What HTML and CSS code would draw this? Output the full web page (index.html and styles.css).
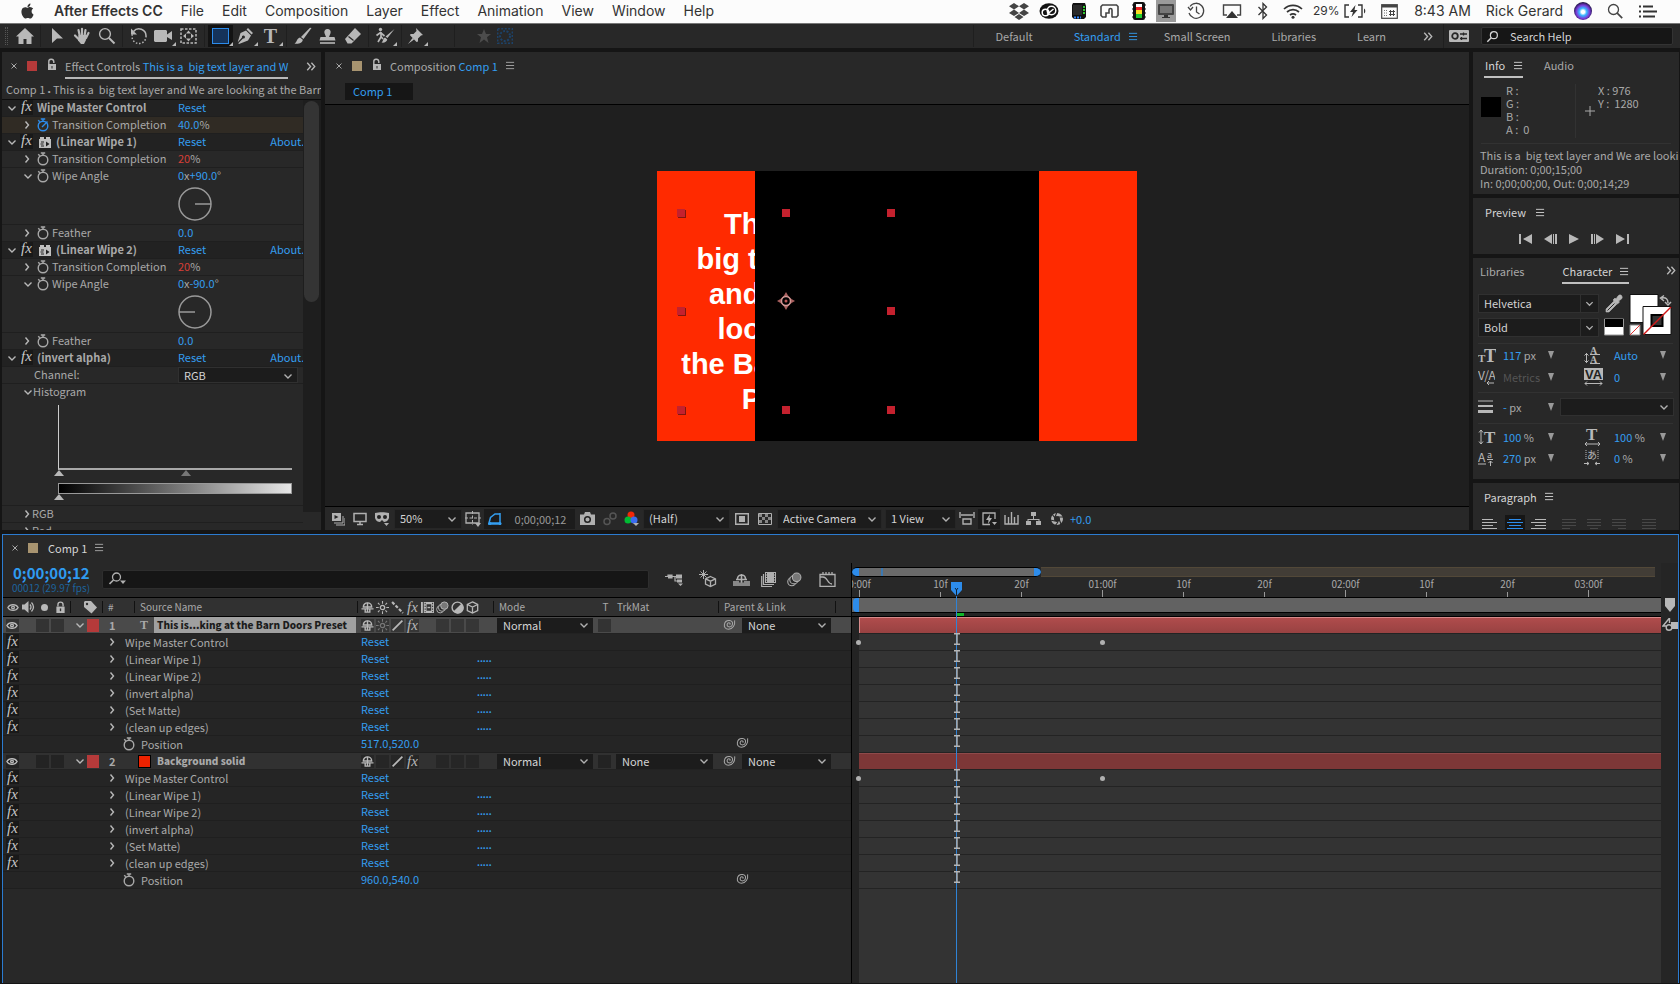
FILE: index.html
```html
<!DOCTYPE html>
<html lang="en">
<head>
<meta charset="utf-8">
<title>After Effects CC</title>
<link rel="stylesheet" href="styles.css">
</head>
<body>
<svg class="defs" aria-hidden="true">
  <symbol id="chev-d" viewBox="0 0 10 10"><path d="M1.500 3.500 5 7l3.500-3.500" fill="none" stroke="currentColor" stroke-width="1.400"/></symbol>
  <symbol id="chev-r" viewBox="0 0 10 10"><path d="M3.500 1.500 6.500 5l-3 3.500" fill="none" stroke="currentColor" stroke-width="1.400"/></symbol>
  <symbol id="watch" viewBox="0 0 14 14"><g fill="none" stroke="currentColor" stroke-width="1.400"><circle cx="7" cy="8" r="4.800"/><path d="M4.800 1h4.400M7 1v2M2.200 2.200l1.600 1.600"/></g></symbol>
  <symbol id="watch-on" viewBox="0 0 14 14"><g fill="none" stroke="currentColor" stroke-width="1.400"><circle cx="7" cy="8" r="4.800"/><path d="M4.800 1h4.400M7 1v2M2.200 2.200l1.600 1.600M6 9l5.500-5.500"/></g></symbol>
  <symbol id="brick" viewBox="0 0 14 14"><path d="M2 2h4v2h2V2h4v2h1v9H1V4h1z"/><path d="M3 7h3M2.500 9h3M3 11h3" stroke="#222" fill="none"/><path d="M8 6.500v5L11.500 9z" fill="#222"/></symbol>
  <symbol id="burger" viewBox="0 0 10 10"><path d="M0 1.500h9M0 5h9M0 8.500h9" stroke="currentColor" stroke-width="1"/></symbol>
  <symbol id="more" viewBox="0 0 12 12"><path d="M1.500 1.500 5.500 6l-4 4.500M6.500 1.500l4 4.500-4 4.500" fill="none" stroke="currentColor" stroke-width="1.600"/></symbol>
  <symbol id="close" viewBox="0 0 8 8"><path d="M1.500 1.500l5 5m0-5l-5 5" stroke="currentColor" stroke-width="1"/></symbol>
  <symbol id="unlock" viewBox="0 0 12 14"><path d="M2 6h8v6H2z"/><path d="M2.800 6V4a2.400 2.400 0 0 1 5-.500V5" fill="none" stroke="currentColor" stroke-width="1.400"/><path d="M6 8v2.500" stroke="#282828"/></symbol>
  <symbol id="lock" viewBox="0 0 12 14"><path d="M1.500 6h9v7h-9z"/><path d="M3.200 6V4a2.800 2.800 0 0 1 5.600 0v2" fill="none" stroke="currentColor" stroke-width="1.500"/><path d="M6 8v3" stroke="#303030" stroke-width="1.500"/></symbol>
  <symbol id="lens" viewBox="0 0 16 14"><circle cx="9" cy="5.500" r="4" fill="none" stroke="currentColor" stroke-width="1.400"/><path d="M6 8.500 1.500 13" stroke="currentColor" stroke-width="1.600"/></symbol>
  <symbol id="eye" viewBox="0 0 14 10"><path d="M1 5c2.500-4.500 9.500-4.500 12 0-2.500 4.500-9.500 4.500-12 0z" fill="none" stroke="currentColor" stroke-width="1.500"/><circle cx="7" cy="5" r="2.300"/><circle cx="7" cy="5" r=".8" fill="#333"/></symbol>
  <symbol id="swirl" viewBox="0 0 14 12"><path d="M12.500 1c.8 5-2 9.500-6.500 9.500C2.500 10.500 1 8 1.500 5.500 2 2.500 4.500 1 7 1.200c2.500.2 3.700 2 3.200 4-.4 2-2 3-3.700 2.800-1.500-.2-2.300-1.500-2-2.700.4-1.300 1.500-1.800 2.500-1.500.8.300 1 1.200.2 1.800" fill="none" stroke="currentColor" stroke-width="1.100"/></symbol>
  <symbol id="shy" viewBox="0 0 14 14"><path d="M2.500 6.500a4.500 4.500 0 0 1 9 0z" fill="none" stroke="currentColor" stroke-width="1.500"/><path d="M7 2v9.500M.5 8.500h13M4.500 9v3h5V9" fill="none" stroke="currentColor" stroke-width="1.500"/></symbol>
  <symbol id="sun" viewBox="0 0 12 12"><circle cx="6" cy="6" r="2" fill="none" stroke="currentColor" stroke-width="1.200"/><path d="M6 0v2.500M6 9.500V12M0 6h2.500M9.500 6H12M1.800 1.800l1.500 1.500M8.700 8.700l1.500 1.500M10.200 1.800 8.700 3.300M3.300 8.700l-1.500 1.500" stroke="currentColor"/></symbol>
  <symbol id="slash" viewBox="0 0 12 12"><path d="M1.500 10.500l9-9" stroke="currentColor" stroke-width="1.600"/></symbol>
  <symbol id="dots" viewBox="0 0 12 12"><path d="M1 1l10 10" stroke="currentColor" stroke-width="2" stroke-dasharray="3 1.500"/></symbol>
  <symbol id="film" viewBox="0 0 14 14"><path d="M0 1h2v12H0zM3 1h11v12H3z"/><path d="M4.500 2v10M12.500 2v10" stroke="#222" stroke-dasharray="1.500 1.500"/><path d="M6 3.500h5v7H6z" fill="#333"/><path d="M7 7h3" stroke="currentColor" stroke-width="1.500"/></symbol>
  <symbol id="blur" viewBox="0 0 14 14"><g stroke="currentColor" fill="#292929"><circle cx="4.500" cy="9" r="3.800"/><circle cx="6.500" cy="7.200" r="3.900"/><circle cx="9" cy="5" r="4" fill="#777"/></g></symbol>
  <symbol id="half" viewBox="0 0 12 12"><circle cx="6" cy="6" r="5" fill="none" stroke="currentColor" stroke-width="1.300"/><path d="M9.800 2.200A5.400 5.400 0 1 1 2.200 9.800z"/></symbol>
  <symbol id="cube" viewBox="0 0 12 12"><path d="M6 .8l4.800 2.400v5.600L6 11.200 1.200 8.800V3.200zM1.200 3.200 6 5.600l4.800-2.400M6 5.600v5.600" fill="none" stroke="currentColor" stroke-width="1.200"/></symbol>
  <symbol id="ibeam" viewBox="0 0 8 12"><path d="M1 .700h6M1 11.300h6M4 1v10" fill="none" stroke="#b5b5b5" stroke-width="1.400"/></symbol>
  <symbol id="tri-d" viewBox="0 0 8 8"><path d="M1 0h6L4 8z"/></symbol>
</svg>

<div class="app">
<header class="menubar">
  <nav class="menus">
    <button class="apple" aria-label="Apple menu"><svg width="15" height="16" viewBox="0 0 24 24"><path d="M12.152 6.896c-.948 0-2.415-1.078-3.960-1.040-2.040.027-3.910 1.183-4.961 3.014-2.117 3.675-.546 9.103 1.519 12.090 1.013 1.454 2.208 3.090 3.792 3.039 1.520-.065 2.090-.987 3.935-.987 1.831 0 2.350.987 3.960.948 1.637-.026 2.676-1.480 3.676-2.948 1.156-1.688 1.636-3.325 1.662-3.415-.039-.013-3.182-1.221-3.220-4.857-.026-3.040 2.480-4.494 2.597-4.559-1.429-2.090-3.623-2.324-4.390-2.376-2-.156-3.675 1.090-4.610 1.090zM15.530 3.830c.843-1.012 1.400-2.427 1.245-3.830-1.207.052-2.662.805-3.532 1.818-.780.896-1.454 2.338-1.273 3.714 1.338.104 2.715-.688 3.559-1.701"/></svg></button>
    <button class="strong">After Effects CC</button><button>File</button><button>Edit</button><button>Composition</button><button>Layer</button><button>Effect</button><button>Animation</button><button>View</button><button>Window</button><button>Help</button>
  </nav>
  <div class="status">
    <span class="c30"><svg width="20" height="18" viewBox="0 0 20 18"><path d="M5 1l5 3.300-5 3.300L0 4.300zM15 1l5 3.300-5 3.300-5-3.300zM5 7.600l5 3.300-5 3.200-5-3.200zM15 7.600l5 3.300-5 3.200-5-3.200zM10 12l4.500 2.900L10 18l-4.500-3.100z" fill="#444"/></svg></span>
    <span class="c30"><svg width="20" height="16" viewBox="0 0 20 16"><ellipse cx="10" cy="8" rx="9.500" ry="7.800" fill="#111"/><g fill="none" stroke="#fff" stroke-width="1.500"><circle cx="6.500" cy="9.500" r="3.300"/><circle cx="12.500" cy="7.500" r="4.300"/><path d="M8 11.500 14.500 6"/></g></svg></span>
    <span class="c30"><svg width="18" height="18" viewBox="0 0 18 18"><path d="M3 1h12l1 3v11l-2 2H4l-2-2V3z" fill="#111"/><path d="M3 3h9v10H3z" fill="#2a2a2a"/><path d="M14 4v8" stroke="#3c3" stroke-width="2" stroke-dasharray="2 1"/><path d="M4 15.500h7" stroke="#38f" stroke-width="2" stroke-dasharray="2 1"/></svg></span>
    <span class="c30"><svg width="19" height="16" viewBox="0 0 19 16"><g fill="none" stroke="#444" stroke-width="1.600"><path d="M6 14H2.500L1 12.500v-9L2.500 2h14L18 3.500v9L16.500 14H12"/><path d="M6 14.500V10h3V7a1.500 1.500 0 0 1 3 0v7.500"/></g></svg></span>
    <span class="c30"><svg width="14" height="18" viewBox="0 0 14 18"><rect x="1" width="12" height="18" rx="2" fill="#111"/><path d="M0 3h14M0 7h14M0 11h14M0 15h14" stroke="#111"/><path d="M4 2h6v3H4z" fill="#fff"/><path d="M4 5h6v3H4z" fill="#e22"/><path d="M4 8h6v4H4z" fill="#fd2"/><path d="M4 12h6v4H4z" fill="#2c3"/></svg></span>
    <span class="c24"><svg width="20" height="22" viewBox="0 0 20 22"><rect width="20" height="22" fill="#9a9a9a"/><rect x="2" y="4" width="16" height="11" rx="1" fill="#444"/><rect x="4" y="6" width="12" height="7" fill="#777"/><path d="M8 15h4v2h2v1H6v-1h2z" fill="#333"/></svg></span>
    <span class="c36"><svg width="18" height="18" viewBox="0 0 18 18"><path d="M3 4.500A7.500 7.500 0 1 1 2 11M1 5l2.500 3L6 5" fill="none" stroke="#444" stroke-width="1.300"/><path d="M9.500 4.500V10l3 2" fill="none" stroke="#444" stroke-width="1.300"/></svg></span>
    <span class="c36"><svg width="20" height="16" viewBox="0 0 20 16"><path d="M5 12H1.500V2h17v10H15" fill="none" stroke="#444" stroke-width="1.400"/><path d="M10 8l6 7H4z" fill="#333"/></svg></span>
    <span class="c26"><svg width="12" height="18" viewBox="0 0 12 18"><path d="M1.500 5l8 8L6 16.500v-15L9.500 5l-8 8" fill="none" stroke="#333" stroke-width="1.300"/></svg></span>
    <span class="c34"><svg width="22" height="16" viewBox="0 0 22 16"><g fill="none" stroke="#333" stroke-width="1.700"><path d="M2 6a13 13 0 0 1 18 0M5 9a9 9 0 0 1 12 0M8 12a5 5 0 0 1 6 0"/></g><circle cx="11" cy="14.300" r="1.500" fill="#333"/></svg></span>
    <span class="pct">29%</span>
    <span class="c28"><svg width="24" height="14" viewBox="0 0 24 14"><path d="M6 1H2v12h4M15 1h4v12h-4" fill="none" stroke="#333" stroke-width="1.400"/><path d="M21 4.500a3 3 0 0 1 0 5z"/><path d="M12.500 1 7 8h3l-1.500 5L14.500 6h-3z" fill="#333"/></svg></span>
    <span class="c40"><svg width="17" height="15" viewBox="0 0 17 15"><rect x=".7" y=".7" width="15.600" height="13.600" fill="none" stroke="#444" stroke-width="1.200"/><path d="M1 1h15v2.500H1z" fill="#444"/><path d="M3 6.500h4M3 9h4M3 11.500h4" stroke="#777" stroke-dasharray="1 1"/><path d="M9.500 6v6M12.500 6v6M8 7.500h6M8 10.500h6" stroke="#444" fill="none"/></svg></span>
    <span class="clock">8:43 AM</span><span class="user">Rick Gerard</span>
    <span class="siri"></span>
    <span class="c44"><svg width="16" height="16" viewBox="0 0 16 16"><circle cx="6.500" cy="6.500" r="5" fill="none" stroke="#444" stroke-width="1.300"/><path d="M10.200 10.200l5 5" stroke="#444" stroke-width="1.700"/></svg></span>
    <span class="c22"><svg width="18" height="13" viewBox="0 0 18 13"><path d="M0 1.500h2M4 1.500h10M0 6.500h2M4 6.500h14M0 11.500h2M4 11.500h12" stroke="#333" stroke-width="1.800"/></svg></span>
  </div>
</header>

<div class="toolbar">
  <div class="grip"></div>
  <button class="tool home" aria-label="Home"><svg width="18" height="16" viewBox="0 0 18 16"><path d="M9 0l9 8.500h-2.500V16h-5v-5h-3v5h-5V8.500H0z"/></svg></button>
  <div class="group">
    <button class="tool" aria-label="Selection"><svg width="14" height="18" viewBox="0 0 14 18"><path d="M2 1l11 10.500H7L2 16z"/></svg></button>
    <button class="tool" aria-label="Hand"><svg width="18" height="18" viewBox="0 0 18 18"><g stroke="currentColor" stroke-width="2.200" stroke-linecap="round"><path d="M5.500 3l1.500 7M9 1.800V9M12.500 3 11.500 9M15.500 6l-2.500 5M2 8.500l4 4"/></g><path d="M5.500 8h8.300l-1 5.500L11 17H8l-3-3.500z"/></svg></button>
    <button class="tool" aria-label="Zoom"><svg width="18" height="18" viewBox="0 0 18 18"><circle cx="7" cy="7" r="5.400" fill="none" stroke="currentColor" stroke-width="1.400"/><path d="M11 11l5.500 5.500" stroke="currentColor" stroke-width="2"/></svg></button>
  </div>
  <div class="group">
    <button class="tool" aria-label="Rotate"><svg width="18" height="18" viewBox="0 0 18 18"><path d="M3.500 4.500A7 7 0 0 1 16 9" fill="none" stroke="currentColor" stroke-width="1.500"/><path d="M16 9A7 7 0 1 1 2.500 7" fill="none" stroke="currentColor" stroke-width="1.500" stroke-dasharray="1.500 1.800"/><path d="M1 1.500v6h6z"/></svg></button>
    <button class="tool more-tools" aria-label="Camera"><svg width="19" height="13" viewBox="0 0 19 13"><path d="M1 0h11l1 1v3.500L18 1v9l-5-3v4l-1 1H1l-1-1V1z"/></svg></button>
    <button class="tool" aria-label="Pan behind"><svg width="17" height="16" viewBox="0 0 17 16"><rect x="1" y="1" width="15" height="14" fill="none" stroke="currentColor" stroke-width="1.500" stroke-dasharray="2.500 1.500"/><path d="M8.500 2.500l2.500 3H6zM8.500 13.500l2.500-3H6zM3 8l3-2.500v5zM14 8l-3-2.500v5z"/></svg></button>
  </div>
  <div class="group">
    <button class="tool more-tools active" aria-label="Rectangle"><span class="rect-tool"></span></button>
    <button class="tool more-tools" aria-label="Pen"><svg width="17" height="18" viewBox="0 0 17 18"><path d="M11 1l5 5-1.500 1.500-5-5zM9 3.500l5 5-3 5L2 17l-.7-.8L6 11.500A1.500 1.500 0 1 0 5 10.500L.7 15.300 3.500 6z"/></svg></button>
    <button class="tool more-tools tt" aria-label="Type">T</button>
  </div>
  <div class="group">
    <button class="tool" aria-label="Brush"><svg width="18" height="18" viewBox="0 0 18 18"><path d="M17.500 1 9.500 12 7 10 16 .8zM6 10.500l2.800 2.300C8.500 16 4 17.500.5 16.500 3 15.500 2.500 11.500 6 10.500z"/></svg></button>
    <button class="tool" aria-label="Clone stamp"><svg width="17" height="17" viewBox="0 0 17 17"><path d="M8.500 1a3.200 3.200 0 0 1 3 4.300L10 9h5.500l1 3.500H.5l1-3.500H7L5.500 5.300A3.200 3.200 0 0 1 8.500 1z"/><path d="M1 15h15" stroke="currentColor" stroke-width="1.600"/></svg></button>
    <button class="tool" aria-label="Eraser"><svg width="18" height="18" viewBox="0 0 18 18"><path d="M11 1l6 6L7.500 16.500h-4L1 12z"/><path d="M4.500 9.500l5 4" stroke="#282828" stroke-width="1.200"/></svg></button>
  </div>
  <div class="group one"><button class="tool more-tools" aria-label="Roto brush"><svg width="20" height="18" viewBox="0 0 20 18"><circle cx="5.500" cy="2.500" r="1.700"/><path d="M6 5v5l-3 5M6 9.500 8 12M1.500 8.500 5.500 5.500 9.500 9" stroke="currentColor" stroke-width="1.700" fill="none"/><path d="M19.500 2l-7 9-2-1.500zM10 10.500l2.300 2c-.3 2.500-3.300 3.500-5.800 3 1.800-1 1.300-4 3.500-5z"/></svg></button></div>
  <div class="group pin"><button class="tool more-tools" aria-label="Puppet pin"><svg width="17" height="18" viewBox="0 0 17 18"><path d="M9 1l7 7-2 .5-3 3v3L9.500 15 3 8.300l.5-1.300h3L9.500 4zM5.500 11l1.500 1.500L1 17z"/></svg></button></div>
  <div class="group extras">
    <svg width="14" height="14" viewBox="0 0 14 14"><path d="M7 0l2 5h5l-4 3.300L11.500 14 7 10.500 2.500 14 4 8.300 0 5h5z" fill="#4c4c4c"/></svg>
    <svg width="16" height="16" viewBox="0 0 16 16"><rect x=".7" y=".7" width="14.600" height="14.600" fill="none" stroke="#1d4268" stroke-width="1.500" stroke-dasharray="2 1.500"/><circle cx="8" cy="8" r="5" fill="none" stroke="#1d4268" stroke-width="2" stroke-dasharray="2 1.500"/></svg>
  </div>
  <nav class="workspaces">
    <button>Default</button>
    <span class="ws-on"><button>Standard</button><svg class="burger"><use href="#burger"/></svg></span>
    <button>Small Screen</button><button>Libraries</button><button>Learn</button>
    <svg class="more"><use href="#more"/></svg>
  </nav>
  <div class="sync"><svg width="20" height="12" viewBox="0 0 20 12"><rect width="20" height="12" rx="1"/><circle cx="6" cy="6" r="2.800" fill="none" stroke="#282828" stroke-width="1.800"/><path d="M11 4h7M11 8.500h7M14.500 2.500v3M12.500 7v3" stroke="#282828" stroke-width="1.300"/></svg></div>
  <label class="search-help"><svg width="14" height="13"><use href="#lens"/></svg><input type="text" placeholder="Search Help" aria-label="Search Help"></label>
</div>

<main class="upper">
<section class="panel effects">
  <div class="tabs">
    <svg class="close"><use href="#close"/></svg><span class="sq red"></span><svg class="unlock"><use href="#unlock"/></svg>
    <span class="tabname under">Effect Controls <b>This is a  big text layer and W</b></span>
    <svg class="more"><use href="#more"/></svg>
  </div>
  <p class="crumb">Comp 1 <span class="bullet">•</span> This is a  big text layer and We are looking at the Barn</p>
  <div class="fx-scroll">
    <div class="fx-list">
      <div class="fr head"><span class="n"><svg class="ch"><use href="#chev-d"/></svg><i class="fx">fx</i>Wipe Master Control</span><button>Reset</button></div>
      <div class="fr keyed sub"><span class="n"><svg class="ch"><use href="#chev-r"/></svg><svg class="sw on"><use href="#watch-on"/></svg>Transition Completion</span><span class="v"><b>40.0</b>%</span></div>
      <div class="fr head"><span class="n"><svg class="ch"><use href="#chev-d"/></svg><i class="fx">fx</i><svg class="brick"><use href="#brick"/></svg>(Linear Wipe 1)</span><button>Reset</button><button class="about">About.</button></div>
      <div class="fr sub"><span class="n"><svg class="ch"><use href="#chev-r"/></svg><svg class="sw"><use href="#watch"/></svg>Transition Completion</span><span class="v"><b class="r">20</b>%</span></div>
      <div class="fr sub nb"><span class="n"><svg class="ch"><use href="#chev-d"/></svg><svg class="sw"><use href="#watch"/></svg>Wipe Angle</span><span class="v"><b>0</b>x<b>+90.0</b>°</span></div>
      <div class="dial"><svg width="36" height="36" viewBox="0 0 36 36"><circle cx="18" cy="18" r="16"/><path d="M18 18h16"/></svg></div>
      <div class="fr sub"><span class="n"><svg class="ch"><use href="#chev-r"/></svg><svg class="sw"><use href="#watch"/></svg>Feather</span><span class="v"><b>0.0</b></span></div>
      <div class="fr head"><span class="n"><svg class="ch"><use href="#chev-d"/></svg><i class="fx">fx</i><svg class="brick"><use href="#brick"/></svg>(Linear Wipe 2)</span><button>Reset</button><button class="about">About.</button></div>
      <div class="fr sub"><span class="n"><svg class="ch"><use href="#chev-r"/></svg><svg class="sw"><use href="#watch"/></svg>Transition Completion</span><span class="v"><b class="r">20</b>%</span></div>
      <div class="fr sub nb"><span class="n"><svg class="ch"><use href="#chev-d"/></svg><svg class="sw"><use href="#watch"/></svg>Wipe Angle</span><span class="v"><b>0</b>x<b>-90.0</b>°</span></div>
      <div class="dial"><svg width="36" height="36" viewBox="0 0 36 36"><circle cx="18" cy="18" r="16"/><path d="M18 18H2"/></svg></div>
      <div class="fr sub"><span class="n"><svg class="ch"><use href="#chev-r"/></svg><svg class="sw"><use href="#watch"/></svg>Feather</span><span class="v"><b>0.0</b></span></div>
      <div class="fr head"><span class="n"><svg class="ch"><use href="#chev-d"/></svg><i class="fx">fx</i>(invert alpha)</span><button>Reset</button><button class="about">About.</button></div>
      <div class="fr chan"><label class="n" for="channel">Channel:</label><span class="sel"><select id="channel"><option>RGB</option></select><svg><use href="#chev-d"/></svg></span></div>
      <div class="fr sub nb tight"><span class="n"><svg class="ch"><use href="#chev-d"/></svg>Histogram</span></div>
      <div class="histo"><div class="plot"></div><svg class="marks" viewBox="0 0 240 6"><path d="M0 6l5-6 5 6z" fill="#b8b8b8"/><path d="M127 6l5-6 5 6z" fill="#777"/></svg><div class="ramp"></div><svg class="marks" viewBox="0 0 240 6"><path d="M0 6l5-6 5 6z" fill="#b8b8b8"/></svg></div>
      <div class="fr sub tight"><span class="n"><svg class="ch"><use href="#chev-r"/></svg>RGB</span></div>
      <div class="fr sub tight"><span class="n"><svg class="ch"><use href="#chev-r"/></svg>Red</span></div>
    </div>
    <div class="bar"><div class="thumb"></div></div>
  </div>
</section>

<section class="panel comp">
  <div class="tabs">
    <svg class="close"><use href="#close"/></svg><span class="sq tan"></span><svg class="unlock"><use href="#unlock"/></svg>
    <span class="tabname">Composition <b>Comp 1</b></span><svg class="burger"><use href="#burger"/></svg>
  </div>
  <div class="flow"><button>Comp 1</button></div>
  <div class="viewer">
    <div class="stage">
      <div class="door left"><div class="copy">This is a 
big text layer
and We are
looking at
the Barn Doors
Preset</div></div>
      <div class="door"></div>
      <i class="h hl ht"></i><i class="h hc ht"></i><i class="h hr ht"></i>
      <i class="h hl hm"></i><i class="h hr hm"></i>
      <i class="h hl hb"></i><i class="h hc hb"></i><i class="h hr hb"></i>
      <svg class="anchor" viewBox="0 0 20 20"><path d="M10 1l2 3.500 3.500 3.500L19 10l-3.500 2-3.500 3.500L10 19l-2-3.500L4.500 12 1 10l3.500-2L8 4.500z" fill="#a9605f"/><circle cx="10" cy="10" r="4.500" fill="#000" stroke="#d09a98" stroke-width="1.400"/><circle cx="10" cy="10" r="1.500" fill="#b55"/></svg>
    </div>
  </div>
  <div class="comp-foot">
    <span class="c22"><svg width="14" height="14" viewBox="0 0 14 14"><path d="M1 1h9v8H1z"/><path d="M3.500 3v4l4-2z" fill="#222"/><path d="M3 11h9V4M5 13h9V6" fill="none" stroke="currentColor"/></svg></span>
    <span class="c22"><svg width="14" height="14" viewBox="0 0 14 14"><path d="M1 1.500h12v8H1zM4 12.500h6M7 9.500v3" fill="none" stroke="currentColor" stroke-width="1.500"/></svg></span>
    <span class="c22"><svg width="16" height="14" viewBox="0 0 16 14"><path d="M1 1c4-1 10-1 14 0v5c-1 3-3.500 4-5 4L8 8l-2 2C4 10 2 9 1 6z"/><circle cx="5" cy="5" r="2" fill="#222"/><circle cx="11" cy="5" r="2" fill="#222"/><path d="M10 11h5l-2.500 3z"/></svg></span>
    <span class="sel w68"><select aria-label="Magnification"><option>50%</option></select><svg><use href="#chev-d"/></svg></span>
    <span class="c22"><svg width="16" height="16" viewBox="0 0 16 16"><path d="M1 2h13v10H1z" fill="none" stroke="currentColor" stroke-width="1.300"/><path d="M7.500 0v14M0 7h16" stroke="currentColor" stroke-dasharray="3 1.500"/><path d="M10 12h6l-3 4z"/></svg></span>
    <span class="c22 box blue"><svg width="16" height="14" viewBox="0 0 16 14"><path d="M2 11 3.500 5.500 8 2h5v9zM13 1v12M1 12h13" fill="none" stroke="currentColor" stroke-width="1.500"/><circle cx="3" cy="11.500" r="1.500"/><circle cx="13" cy="11.500" r="1.500"/></svg></span>
    <button class="time">0;00;00;12</button>
    <span class="c24"><svg width="15" height="13" viewBox="0 0 15 13"><path d="M0 2.500h4L5 0h5l1 2.500h4V13H0z"/><circle cx="7.500" cy="7.500" r="2.800" fill="none" stroke="#222" stroke-width="1.500"/></svg></span>
    <span class="c20 dim"><svg width="15" height="14" viewBox="0 0 15 14"><circle cx="5" cy="9.500" r="3" fill="none" stroke="currentColor" stroke-width="1.500"/><circle cx="11" cy="4" r="3" fill="none" stroke="currentColor" stroke-width="1.500"/></svg></span>
    <span class="c24"><svg width="15" height="15" viewBox="0 0 15 15"><circle cx="7" cy="4" r="3.500" fill="#f22808"/><circle cx="4" cy="9" r="3.500" fill="#0b3"/><circle cx="10" cy="9" r="3.500" fill="#3b6cf0"/><path d="M9 12h6l-3 3z"/></svg></span>
    <span class="sel w88"><select aria-label="Resolution"><option>(Half)</option></select><svg><use href="#chev-d"/></svg></span>
    <span class="c24"><svg width="14" height="12" viewBox="0 0 14 12"><path d="M.7.700h12.600v10.600H.7z" fill="none" stroke="currentColor" stroke-width="1.400"/><path d="M4 3h6v6H4z"/></svg></span>
    <span class="c22"><svg width="14" height="12" viewBox="0 0 14 12"><path d="M.5.500h13v11H.5z" fill="none" stroke="currentColor"/><path d="M1 1h3v3H1zM7 1h3v3H7zM4 4h3v3H4zM10 4h3v3h-3zM1 7h3v3H1zM7 7h3v3H7z" fill="#888"/></svg></span>
    <span class="sel w106"><select aria-label="3D view"><option>Active Camera</option></select><svg><use href="#chev-d"/></svg></span>
    <span class="sel w72"><select aria-label="View layout"><option>1 View</option></select><svg><use href="#chev-d"/></svg></span>
    <span class="c22"><svg width="16" height="14" viewBox="0 0 16 14"><path d="M1 0v6M15 0v6M2 3h12M4 7h8v5H4z" fill="none" stroke="currentColor" stroke-width="1.400"/></svg></span>
    <span class="c22 box"><svg width="15" height="14" viewBox="0 0 15 14"><path d="M8 12.500H1V1h12v6" fill="none" stroke="currentColor" stroke-width="1.300"/><path d="M8 2 4 8h2.500L6 12l4-6H7.500zM10 10h5l-2.500 3z"/></svg></span>
    <span class="c22"><svg width="15" height="13" viewBox="0 0 15 13"><path d="M1 3v9h13V3M4.500 5v7M7.500 0v12M10.500 5v7" fill="none" stroke="currentColor" stroke-width="1.400"/></svg></span>
    <span class="c22"><svg width="15" height="13" viewBox="0 0 15 13"><path d="M5 0h5v4H5zM0 9h5v4H0zM10 9h5v4h-5zM7 4h1v3h5.500v2h-1V8h-10v1h-1V7H7z"/></svg></span>
    <span class="c26"><svg width="14" height="14" viewBox="0 0 14 14"><circle cx="7" cy="7" r="4.500" fill="none" stroke="currentColor" stroke-width="3"/><path d="M7 0 5 5M13 5 8 5M11 12 9 7M5 14l3-4M0 8l5 1M2 2l3 4" stroke="#282828" stroke-width="1.200"/></svg></span>
    <button class="expo">+0.0</button>
  </div>
</section>

<aside class="side">
  <section class="panel info">
    <div class="stabs"><button class="on">Info<svg class="burger"><use href="#burger"/></svg></button><button>Audio</button></div>
    <div class="readout">
      <span class="swatch"></span>
      <div class="rgb"><span>R :</span><span>G :</span><span>B :</span><span>A :&nbsp; 0</span></div>
      <svg class="plus" width="10" height="10" viewBox="0 0 10 10"><path d="M5 0v10M0 5h10" stroke="currentColor"/></svg>
      <div class="xy"><span>X : 976</span><span>Y :&nbsp; 1280</span></div>
    </div>
    <div class="lines"><p>This is a  big text layer and We are lookin</p><p>Duration: 0;00;15;00</p><p>In: 0;00;00;00, Out: 0;00;14;29</p></div>
  </section>
  <section class="panel preview">
    <h2>Preview<svg class="burger"><use href="#burger"/></svg></h2>
    <div class="transport">
      <button aria-label="First frame"><svg width="13" height="10" viewBox="0 0 13 10"><path d="M0 0h2v10H0zM13 0v10L4 5z"/></svg></button>
      <button aria-label="Previous frame"><svg width="13" height="10" viewBox="0 0 13 10"><path d="M8 0v10L0 5zM9 0h1v10H9zM11 0h2v10h-2z"/></svg></button>
      <button aria-label="Play"><svg width="10" height="10" viewBox="0 0 10 10"><path d="M0 0v10l10-5z"/></svg></button>
      <button aria-label="Next frame"><svg width="13" height="10" viewBox="0 0 13 10"><path d="M5 0v10l8-5zM3 0h1v10H3zM0 0h2v10H0z"/></svg></button>
      <button aria-label="Last frame"><svg width="13" height="10" viewBox="0 0 13 10"><path d="M11 0h2v10h-2zM0 0v10l9-5z"/></svg></button>
    </div>
  </section>
  <section class="panel char">
    <div class="stabs wide"><button>Libraries</button><button class="on">Character<svg class="burger"><use href="#burger"/></svg></button><svg class="more"><use href="#more"/></svg></div>
    <div class="fonts">
      <div class="pickers">
        <span class="sel"><select aria-label="Font family"><option>Helvetica</option></select><svg><use href="#chev-d"/></svg></span>
        <span class="sel"><select aria-label="Font style"><option>Bold</option></select><svg><use href="#chev-d"/></svg></span>
      </div>
      <svg width="70" height="42" viewBox="0 0 70 42" class="swatches"><path d="M2 18v-3l8-8 3 3-8 8zM9 6l2-2 1 1 2-3q2-2 3.500-.5t0 3.500L14.500 7l1 1-2 2z" stroke="#b8b8b8" stroke-width=".6"/><path d="M3.500 16.500l7-7" stroke="#282828"/><path d="M.5 25h19v16H.5z" fill="#fff" stroke="#999"/><path d="M1 25h18v8H1z" fill="#000"/><path d="M26 .5h28v28H26z" fill="#fff" stroke="#111"/><path d="M26 31h10v10H26z" fill="#fff" stroke="#888"/><path d="M26 41l10-10" stroke="#d33"/><path d="M39 12.500h28v28H39z" fill="#fff" stroke="#111"/><path d="M47.500 21h11v11h-11z" fill="#333" stroke="#000" stroke-width="2"/><path d="M39.500 40.500 67 13" stroke="#d11919" stroke-width="1.500"/><path d="M58 4q6-1 6 5M60 1.500 56.500 4 60 7M61 8l3 3 3-3" fill="none" stroke="#b8b8b8" stroke-width="1.500"/></svg>
    </div>
    <div class="props">
      <span class="gl"><svg width="18" height="16" viewBox="0 0 18 16"><text x="0" y="15" font-size="11">T</text><text x="6" y="15" font-size="19">T</text></svg></span><span><b>117</b> px</span><svg class="tri"><use href="#tri-d"/></svg>
      <span class="gl"><svg width="17" height="18" viewBox="0 0 17 18"><text x="6" y="8" font-size="10">A</text><text x="6" y="17" font-size="10">A</text><path d="M6 8.500h10M6 17.500h10M2.500 7v10M.5 9.500l2-2 2 2M.5 14.500l2 2 2-2" fill="none" stroke="currentColor"/></svg></span><span><b>Auto</b></span><svg class="tri"><use href="#tri-d"/></svg>
      <span class="gl"><svg width="17" height="16" viewBox="0 0 17 16"><text x="0" y="11" font-size="12" class="ss">V/A</text><path d="M16 14H9M11 12l-2 2 2 2" fill="none" stroke="currentColor"/></svg></span><span class="dim">Metrics</span><svg class="tri"><use href="#tri-d"/></svg>
      <span class="gl"><svg width="19" height="18" viewBox="0 0 19 18"><path d="M0 0h19v12H0z"/><text x="1" y="11" font-size="13" class="cut">VA</text><path d="M1 15.500h17M3 13.500l-2 2 2 2M16 13.500l2 2-2 2" fill="none" stroke="currentColor"/></svg></span><span><b>0</b></span><svg class="tri"><use href="#tri-d"/></svg>
    </div>
    <div class="props stroke">
      <span class="gl"><svg width="15" height="14" viewBox="0 0 15 14"><path d="M0 .5h15v1H0zM0 5h15v2H0zM0 10h15v3H0z"/></svg></span><span><b>-</b> px</span><svg class="tri"><use href="#tri-d"/></svg>
      <span class="sel wide"><select aria-label="Stroke style"><option></option></select><svg><use href="#chev-d"/></svg></span>
    </div>
    <div class="props last">
      <span class="gl"><svg width="18" height="16" viewBox="0 0 18 16"><path d="M3 1v14M1 3.500l2-2.500 2 2.500M1 12.500 3 15l2-2.500" fill="none" stroke="currentColor"/><text x="6" y="14" font-size="17">T</text></svg></span><span><b>100</b> %</span><svg class="tri"><use href="#tri-d"/></svg>
      <span class="gl"><svg width="17" height="18" viewBox="0 0 17 18"><text x="2" y="12" font-size="17">T</text><path d="M1 16h15M3 14l-2 2 2 2M14 14l2 2-2 2" fill="none" stroke="currentColor"/></svg></span><span><b>100</b> %</span><svg class="tri"><use href="#tri-d"/></svg>
      <span class="gl"><svg width="16" height="16" viewBox="0 0 16 16"><text x="0" y="12" font-size="12" class="ss">A</text><text x="9" y="8" font-size="9" class="ss">a</text><path d="M0 14h8M9 9.500h6M12.500 16v-5M10.500 13l2-2 2 2" fill="none" stroke="currentColor"/></svg></span><span><b>270</b> px</span><svg class="tri"><use href="#tri-d"/></svg>
      <span class="gl"><svg width="17" height="16" viewBox="0 0 17 16"><path d="M2 0v10M14 0v10" stroke="currentColor" stroke-dasharray="1 1"/><text x="3" y="9" font-size="10" class="ss">あ</text><path d="M0 13.500h5M3 12l2 1.500L3 15M16 13.500h-5M13 12l-2 1.500 2 1.500" fill="none" stroke="currentColor"/></svg></span><span><b>0</b> %</span><svg class="tri"><use href="#tri-d"/></svg>
    </div>
  </section>
  <section class="panel para">
    <h2>Paragraph<svg class="burger"><use href="#burger"/></svg></h2>
    <svg class="aligns" width="184" height="16" viewBox="0 0 184 16"><path d="M26 0h20v16H26z" fill="#161616"/><g fill="none"><path d="M3 4.500h11M3 7.500h15M3 10.500h11M3 13.500h15M56 4.500h11M52 7.500h15M56 10.500h11M52 13.500h15" stroke="#b8b8b8"/><path d="M30 4.500h12M28 7.500h16M30 10.500h12M28 13.500h16" stroke="#2d8ceb"/><path d="M83 4.500h14M83 7.500h14M83 10.500h14M83 13.500h8M108 4.500h14M108 7.500h14M108 10.500h14M111 13.500h8M133 4.500h14M133 7.500h14M133 10.500h14M139 13.500h8M163 4.500h14M163 7.500h14M163 10.500h14M163 13.500h14" stroke="#484848"/></g></svg>
  </section>
</aside>
</main>

<section class="timeline">
  <div class="tabs">
    <svg class="close"><use href="#close"/></svg><span class="sq tan"></span><span class="tabname lit">Comp 1</span><svg class="burger"><use href="#burger"/></svg>
  </div>
  <div class="tl-body">
  <div class="outline">
    <div class="tl-ctl">
      <div class="tc"><button>0;00;00;12</button><small>00012 (29.97 fps)</small></div>
      <label class="tl-search"><svg width="18" height="14" viewBox="0 0 18 14"><circle cx="7.500" cy="5" r="4" fill="none" stroke="currentColor" stroke-width="1.300"/><path d="M4.500 8 .5 12" stroke="currentColor" stroke-width="1.600"/><path d="M11 8.500h6L14 12z"/></svg><input type="text" aria-label="Search layers"></label>
      <div class="tl-icons">
        <svg width="18" height="14" viewBox="0 0 18 14"><path d="M0 4.500h3V3h4v3H3M7 4.500h10M10 4v5h3" fill="none" stroke="currentColor" stroke-width="1.200"/><path d="M3 3h4v3H3zM11 2.500h6v4h-6zM12 7.500h5v3h-5zM13 11.500h5L15.500 14z"/></svg>
        <svg width="18" height="18" viewBox="0 0 18 18"><path d="M4.500 0v9M0 4.500h9M1.500 1.500l6 6M7.500 1.500l-6 6" stroke="currentColor"/><path d="M11.500 6.500l5 2.300v5.400l-5 2.300-5-2.300V8.800zM6.500 8.800l5 2.400 5-2.400M11.500 11v5.500" fill="none" stroke="currentColor" stroke-width="1.300"/></svg>
        <svg width="17" height="14" viewBox="0 0 17 14"><path d="M4.500 7a4 4 0 0 1 8 0M8.500 2v10M3 7.500h11" fill="none" stroke="currentColor" stroke-width="1.600"/><path d="M0 9h6v1.500h5V9h6v5H0z" fill="#888"/></svg>
        <svg width="15" height="15" viewBox="0 0 15 15"><path d="M4 0h11v11H4z"/><path d="M5.500 1v10M13.500 1v10" stroke="#282828" stroke-dasharray="1.500 1"/><path d="M2.500 2v10.500H13M.7 4v10.500H11" fill="none" stroke="currentColor" stroke-width="1.200"/></svg>
        <svg width="15" height="15"><use href="#blur"/></svg>
        <svg width="17" height="15" viewBox="0 0 17 15"><path d="M1 2.500h15v12H1zM4 0v2M7 0v2M10 0v2M13 0v2M1 5h3c5 0 4 7 9 7" fill="none" stroke="currentColor" stroke-width="1.300"/></svg>
      </div>
    </div>
    <div class="tr th">
      <span class="av"><svg width="12" height="9"><use href="#eye"/></svg><svg width="13" height="12" viewBox="0 0 13 12"><path d="M0 3.500h2.500L6.500 0v12l-4-3.500H0z"/><path d="M8 3.500q2 2.500 0 5M9.500 1.500q4 4.500 0 9" fill="none" stroke="currentColor" stroke-width="1.300"/></svg><i class="dot"></i><svg width="11" height="13"><use href="#lock"/></svg></span>
      <span class="lab"><svg width="13" height="13" viewBox="0 0 13 13"><path d="M0 1l1-1h6l6 6.500L7.500 12.500 0 6z"/><circle cx="3" cy="3" r="1.200" fill="#303030"/></svg></span>
      <span class="num">#</span>
      <span class="src">Source Name</span>
      <span class="sws"><svg><use href="#shy"/></svg><svg><use href="#sun"/></svg><svg><use href="#dots"/></svg><i class="fxt">fx</i><svg><use href="#film"/></svg><svg><use href="#blur"/></svg><svg><use href="#half"/></svg><svg><use href="#cube"/></svg></span>
      <span class="mode">Mode</span><span class="t">T</span><span class="trk">TrkMat</span><span class="par">Parent &amp; Link</span><span class="end"></span>
    </div>
    <div class="tr layer chosen">
      <span class="av"><i class="bx"><svg width="12" height="9"><use href="#eye"/></svg></i><i></i><i class="bx"></i><i class="bx"></i></span>
      <span class="lab"><svg class="ch"><use href="#chev-d"/></svg><i class="col"></i></span><span class="num">1</span>
      <span class="src"><i class="ti">T</i><strong>This is...king at the Barn Doors Preset</strong></span>
      <span class="sws bxs"><svg><use href="#shy"/></svg><svg class="faint"><use href="#sun"/></svg><svg><use href="#slash"/></svg><i class="fxt">fx</i><i class="none"></i><i></i><i></i><i></i></span>
      <span class="mode"><span class="sel"><select aria-label="Layer 1 mode"><option>Normal</option></select><svg><use href="#chev-d"/></svg></span></span><span class="t"><i class="bx"></i></span><span class="trk"></span>
      <span class="par"><svg class="swirl"><use href="#swirl"/></svg><span class="sel"><select aria-label="Layer 1 parent"><option>None</option></select><svg><use href="#chev-d"/></svg></span></span><span class="end"></span>
    </div>
    <div class="er"><i class="fx">fx</i><span class="n"><svg class="ch"><use href="#chev-r"/></svg>Wipe Master Control</span><button>Reset</button></div>
    <div class="er"><i class="fx">fx</i><span class="n"><svg class="ch"><use href="#chev-r"/></svg>(Linear Wipe 1)</span><button>Reset</button><button class="opt">.....</button></div>
    <div class="er"><i class="fx">fx</i><span class="n"><svg class="ch"><use href="#chev-r"/></svg>(Linear Wipe 2)</span><button>Reset</button><button class="opt">.....</button></div>
    <div class="er"><i class="fx">fx</i><span class="n"><svg class="ch"><use href="#chev-r"/></svg>(invert alpha)</span><button>Reset</button><button class="opt">.....</button></div>
    <div class="er"><i class="fx">fx</i><span class="n"><svg class="ch"><use href="#chev-r"/></svg>(Set Matte)</span><button>Reset</button><button class="opt">.....</button></div>
    <div class="er"><i class="fx">fx</i><span class="n"><svg class="ch"><use href="#chev-r"/></svg>(clean up edges)</span><button>Reset</button><button class="opt">.....</button></div>
    <div class="er"><i></i><span class="n pos"><svg class="sw"><use href="#watch"/></svg>Position</span><button>517.0,520.0</button><svg class="swirl"><use href="#swirl"/></svg></div>
    <div class="tr layer">
      <span class="av"><i class="bx"><svg width="12" height="9"><use href="#eye"/></svg></i><i></i><i class="bx"></i><i class="bx"></i></span>
      <span class="lab"><svg class="ch"><use href="#chev-d"/></svg><i class="col"></i></span><span class="num">2</span>
      <span class="src"><i class="solid"></i><strong>Background solid</strong></span>
      <span class="sws bxs"><svg><use href="#shy"/></svg><i></i><svg><use href="#slash"/></svg><i class="fxt">fx</i><i class="none"></i><i></i><i></i><i></i></span>
      <span class="mode"><span class="sel"><select aria-label="Layer 2 mode"><option>Normal</option></select><svg><use href="#chev-d"/></svg></span></span><span class="t"><i class="bx"></i></span>
      <span class="trk"><span class="sel"><select aria-label="Layer 2 track matte"><option>None</option></select><svg><use href="#chev-d"/></svg></span></span>
      <span class="par"><svg class="swirl"><use href="#swirl"/></svg><span class="sel"><select aria-label="Layer 2 parent"><option>None</option></select><svg><use href="#chev-d"/></svg></span></span><span class="end"></span>
    </div>
    <div class="er"><i class="fx">fx</i><span class="n"><svg class="ch"><use href="#chev-r"/></svg>Wipe Master Control</span><button>Reset</button></div>
    <div class="er"><i class="fx">fx</i><span class="n"><svg class="ch"><use href="#chev-r"/></svg>(Linear Wipe 1)</span><button>Reset</button><button class="opt">.....</button></div>
    <div class="er"><i class="fx">fx</i><span class="n"><svg class="ch"><use href="#chev-r"/></svg>(Linear Wipe 2)</span><button>Reset</button><button class="opt">.....</button></div>
    <div class="er"><i class="fx">fx</i><span class="n"><svg class="ch"><use href="#chev-r"/></svg>(invert alpha)</span><button>Reset</button><button class="opt">.....</button></div>
    <div class="er"><i class="fx">fx</i><span class="n"><svg class="ch"><use href="#chev-r"/></svg>(Set Matte)</span><button>Reset</button><button class="opt">.....</button></div>
    <div class="er"><i class="fx">fx</i><span class="n"><svg class="ch"><use href="#chev-r"/></svg>(clean up edges)</span><button>Reset</button><button class="opt">.....</button></div>
    <div class="er"><i></i><span class="n pos"><svg class="sw"><use href="#watch"/></svg>Position</span><button>960.0,540.0</button><svg class="swirl"><use href="#swirl"/></svg></div>
  </div>

  <div class="time-pane">
    <div class="navi"><i class="cap l"></i><i class="view"></i><i class="cap r"></i><i class="rest"></i></div>
    <div class="ruler"><span class="s">0:00f</span><span>10f</span><span>20f</span><span class="s">01:00f</span><span>10f</span><span>20f</span><span class="s">02:00f</span><span>10f</span><span>20f</span><span class="s">03:00f</span></div>
    <div class="work"><i></i></div>
    <div class="cache"><i></i></div>
    <div class="tracks">
      <div class="tk"><div class="clipbar lit"></div></div>
      <div class="tk keys"><i class="k"></i><i class="k k2"></i></div><div class="tk"></div><div class="tk"></div><div class="tk"></div><div class="tk"></div><div class="tk"></div><div class="tk"></div>
      <div class="tk"><div class="clipbar"></div></div>
      <div class="tk keys"><i class="k"></i><i class="k k2"></i></div><div class="tk"></div><div class="tk"></div><div class="tk"></div><div class="tk"></div><div class="tk"></div><div class="tk"></div>
    </div>
    <div class="playhead">
      <svg width="11" height="14" viewBox="0 0 11 14"><path d="M0 0h11v8l-5.500 6L0 8z" fill="#2d8ceb"/><path d="M4 6l1.500 2L7 6M5.500 8v6" stroke="#123" fill="none"/></svg>
      <div class="beams"><svg><use href="#ibeam"/></svg><svg><use href="#ibeam"/></svg><svg><use href="#ibeam"/></svg><svg><use href="#ibeam"/></svg><svg><use href="#ibeam"/></svg><svg><use href="#ibeam"/></svg><svg><use href="#ibeam"/></svg><span></span><svg><use href="#ibeam"/></svg><svg><use href="#ibeam"/></svg><svg><use href="#ibeam"/></svg><svg><use href="#ibeam"/></svg><svg><use href="#ibeam"/></svg><svg><use href="#ibeam"/></svg><svg><use href="#ibeam"/></svg></div>
    </div>
  </div>
  <div class="gutter">
    <svg width="12" height="14" viewBox="0 0 12 14"><path d="M1 0h10v8l-5 6-5-6z"/></svg>
    <svg width="16" height="14" viewBox="0 0 16 14"><path d="M9 4h7v7H9z"/><path d="M7.500 0 1 8h3M7.500 0v5" fill="none" stroke="currentColor" stroke-width="1.400"/><circle cx="7" cy="9.500" r="2.800" fill="#222" stroke="currentColor" stroke-width="1.400"/></svg>
  </div>
  </div>
</section>
</div>
</body>
</html>
```

FILE: styles.css
```css
:root {
  --ui: "Noto Sans CJK SC", "Open Sans", sans-serif;
  --panel: #282828;
  --gap: #151515;
  --text: #a9a9a9;
  --lit: #d4d4d4;
  --blue: #349ef0;
}
* { box-sizing: border-box; }
body { margin: 0; background: var(--gap); color: var(--text); font: 11px/16px var(--ui); overflow: hidden; }
svg { fill: currentColor; flex: none; display: block; }
button, select, input { font: inherit; color: inherit; background: none; border: 0; padding: 0; margin: 0; border-radius: 0; outline: 0; appearance: none; white-space: nowrap; }
p, h2 { margin: 0; font: inherit; }
i { font-style: normal; display: block; flex: none; }
b { font-weight: 400; color: var(--blue); }
.defs { position: absolute; width: 0; height: 0; }
.app { height: 100vh; display: grid; grid-template-rows: 24px 24px minmax(0, 478fr) minmax(0, 449fr); padding-bottom: 1px; }

/* menu bar */
.menubar { display: flex; justify-content: space-between; background: #fcfcfc; color: #333; font: 14px/20px Inter, sans-serif; border-bottom: 1px solid #777; }
.menus { display: flex; gap: 18px; height: 22px; padding-left: 20px; }
.apple { margin-right: 1px; }
.strong { font-weight: 600; }
.status { display: flex; height: 22px; padding-right: 21px; align-items: center; white-space: nowrap; }
.status > span { flex: none; }
.c20, .c22, .c24, .c26, .c28, .c30, .c34, .c36, .c40, .c44 { display: flex; justify-content: center; align-items: center; flex: none; }
.c20 { width: 20px; } .c22 { width: 22px; } .c24 { width: 24px; } .c26 { width: 26px; } .c28 { width: 28px; }
.c30 { width: 30px; } .c34 { width: 34px; } .c36 { width: 36px; } .c40 { width: 40px; } .c44 { width: 44px; }
.pct { width: 31px; padding-left: 3px; font-size: 12px; }
.clock { width: 67px; text-align: center; }
.user { width: 97px; text-align: center; }
.siri { width: 18px; height: 18px; margin: 0 1px; border-radius: 50%; background: radial-gradient(circle at 50% 55%, #fff 0 12%, #38b6ff 28%, #7a3bd8 50%, #1d1540 72%); }

/* tool bar */
.toolbar { display: flex; background: var(--panel); color: #b8b8b8; align-items: center; }
.grip { width: 3px; height: 18px; margin-left: 5px; border-left: 1px dotted #555; border-right: 1px dotted #555; }
.tool { position: relative; width: 25px; height: 22px; display: flex; align-items: center; justify-content: center; }
.home { margin: 0 3px 0 4px; }
.group { display: flex; height: 22px; padding: 0 3px; border-left: 1px solid #1f1f1f; }
.one { padding-right: 4px; }
.pin { width: 53px; padding: 0 1px; }
.extras { padding-left: 22px; gap: 6px; align-items: center; }
.more-tools::after { content: ""; position: absolute; right: 0; bottom: 1px; border: 2px solid; border-color: transparent #b8b8b8 #b8b8b8 transparent; }
.active { background: #131313; }
.rect-tool { width: 17px; height: 16px; border: 1px solid #2d8ceb; background: #15335a; }
.tt { font: 700 20px/22px "Liberation Serif", serif; }
.workspaces { margin-left: auto; display: flex; gap: 41px; align-items: center; height: 22px; padding: 0 10px 0 22px; border-left: 1px solid #1f1f1f; color: var(--text); }
.workspaces button:last-of-type { margin-right: -4px; }
.ws-on { display: flex; align-items: center; gap: 12px; margin-right: -15px; color: var(--blue); }
.burger { width: 9px; height: 9px; }
.more { width: 10px; height: 11px; color: #b8b8b8; }
.sync { width: 38px; height: 24px; display: flex; align-items: center; padding-left: 5px; border-left: 1px solid #1f1f1f; }
.search-help { display: flex; align-items: center; gap: 10px; width: 192px; height: 18px; margin-right: 7px; padding-left: 4px; background: #161616; border: 1px solid #333; border-radius: 2px; color: var(--lit); }
.search-help input { flex: 1; min-width: 0; }
.search-help input::placeholder { color: var(--lit); opacity: 1; }

/* panels */
.upper { display: grid; grid-template-columns: 319px minmax(0, 1fr) 206px; gap: 4px; padding: 4px 1px 0 2px; min-height: 0; }
.panel { background: var(--panel); min-width: 0; overflow: hidden; }
.tabs { display: flex; align-items: center; height: 28px; white-space: pre; }
.close { width: 8px; height: 8px; margin: 0 9px 0 8px; }
.sq { width: 10px; height: 10px; }
.red { background: #b53a3a; } .tan { background: #a89470; }
.unlock { width: 12px; height: 14px; margin: 0 7px 2px 9px; color: #b8b8b8; }
.tabs .burger { margin-left: 8px; }
.lit { color: var(--lit); }

.effects { display: flex; flex-direction: column; }
.effects .under { height: 26px; line-height: 26px; border-bottom: 2px solid #b8b8b8; }
.effects .more { margin-left: auto; margin-right: 5px; }
.crumb { height: 20px; line-height: 18px; padding-left: 4px; white-space: pre; border-bottom: 1px solid #0d0d0d; overflow: hidden; }
.bullet { font: 8px/8px "Liberation Sans", sans-serif; }
.fx-scroll { display: flex; flex: 1; min-height: 0; }
.fx-list { flex: 1; min-width: 0; overflow: hidden; }
.bar { width: 18px; background: #1e1e1e; margin-bottom: 18px; padding: 1px 2px 0 1px; }
.thumb { height: 49%; background: #343434; border-radius: 8px; }
.fr { display: flex; height: 17px; line-height: 15px; border-bottom: 1px solid #1f1f1f; white-space: nowrap; }
.fr .n { display: flex; align-items: center; width: 176px; padding: 0 0 1px 5px; flex: none; }
.fr.sub .n { padding-left: 20px; }
.fr.nb .n { padding-left: 21px; }
.head { background: #222; font-weight: 700; }
.fr button { font-weight: 400; color: var(--blue); padding-bottom: 1px; }
.about { margin-left: 64px; }
.head .fx { margin-right: 4px; }
.ch { width: 10px; height: 10px; color: #b8b8b8; }
.fx { width: 13px; height: 15px; margin-left: 3px; background: #191919; color: #c8c8c8; font: italic 400 15px/13px "Liberation Serif", serif; text-align: center; }
.brick { width: 14px; height: 14px; margin: 0 4px 0 1px; color: #c0c0c0; }
.sw { width: 14px; height: 14px; margin: 0 2px 0 4px; color: #a8a8a8; }
.nb .sw { margin-left: 3px; }
.on.sw { color: #2d8ceb; }
.keyed { background: #302b24; }
.nb { border-color: transparent; }
b.r { color: #d63f37; }
.dial { height: 40px; padding: 1px 0 0 175px; border-bottom: 1px solid #1f1f1f; }
.dial svg { fill: none; stroke: #9a9a9a; stroke-width: 1.500; }
.fr.chan .n { padding-left: 32px; }

/* drop-downs */
.sel { display: grid; align-items: center; background: #1c1c1c; border: 1px solid #303030; color: var(--lit); flex: none; min-width: 0; }
.sel > * { grid-area: 1 / 1; min-width: 0; }
.sel select { width: 100%; height: 15px; line-height: 15px; padding-left: 5px; }
.sel svg { justify-self: end; width: 10px; height: 10px; margin-right: 4px; pointer-events: none; color: #b0b0b0; }
.chan .sel { width: 120px; height: 16px; }

.histo { height: 105px; padding: 4px 0 0 52px; border-bottom: 1px solid #1f1f1f; }
.plot { height: 65px; width: 234px; margin-left: 4px; border-left: 1px solid #ccc; border-bottom: 2px solid #a8a8a8; }
.marks { width: 240px; height: 6px; }
.ramp { width: 234px; height: 11px; margin: 7px 0 0 4px; border: 1px solid #999; background: linear-gradient(90deg, #000, #e6e6e6); }

/* composition viewer */
.comp { display: flex; flex-direction: column; }
.comp .close { margin-left: 10px; }
.comp .tabs { height: 27px; }
.flow { height: 26px; padding: 4px 0 0 20px; border-bottom: 1px solid #000; }
.flow button { width: 68px; height: 17px; line-height: 15px; padding-left: 8px; text-align: left; background: #161616; color: var(--blue); }
.viewer { flex: 1; min-height: 0; display: flex; align-items: center; justify-content: center; background: #1f1f1f; border-bottom: 1px solid #000; }
.stage { position: relative; width: 480px; height: 270px; background: #000; display: flex; justify-content: space-between; }
.door { width: 98px; overflow: hidden; background: #ff2a00; }
.copy { width: 258px; padding-top: 36px; color: #fff; font: 700 29px/35px "Liberation Sans", sans-serif; text-align: center; white-space: pre; }
.h { position: absolute; width: 8px; height: 8px; background: #c4212e; }
.hl { left: 20px; box-shadow: 1px 1px #80160e; } .hc { left: 125px; } .hr { left: 230px; }
.ht { top: 38px; } .hm { top: 136px; } .hb { top: 235px; }
.anchor { position: absolute; left: 119px; top: 120px; width: 20px; height: 20px; }
.comp-foot { display: flex; align-items: center; height: 23px; padding-left: 2px; color: #b0b0b0; }
.comp-foot .sel, .time { height: 20px; border-color: #262626; }
.comp-foot .w68 { width: 68px; margin-left: 1px; }
.w88 { width: 87px; } .w106 { width: 105px; margin: 0 3px 0 1px; } .w72 { width: 71px; }
.comp-foot .box { height: 20px; background: #1b1b1b; }
.blue { color: var(--blue); } .dim { color: #555; }
.time { width: 69px; background: #1c1c1c; color: #999; }
.expo { color: var(--blue); }

/* right column */
.side { display: grid; grid-template: 142px 56px 221px minmax(0, 1fr) / minmax(0, 1fr); gap: 4px; min-width: 0; min-height: 0; }
.stabs { display: flex; gap: 21px; padding-left: 11px; height: 26px; }
.stabs button { display: flex; align-items: center; gap: 9px; height: 26px; padding-top: 2px; border-bottom: 2px solid transparent; }
.stabs .on { color: var(--lit); border-color: #c0c0c0; padding-left: 1px; }
.stabs.wide { gap: 37px; padding-left: 7px; }
.stabs .more { margin: 7px 4px 0 auto; }
.wide .on { gap: 8px; }
.readout { display: flex; height: 66px; margin: 0 8px; border-bottom: 1px solid #323232; line-height: 13px; padding-top: 6px; }
.swatch { width: 20px; height: 20px; background: #000; margin-top: 13px; }
.rgb, .xy { display: flex; flex-direction: column; padding-left: 5px; }
.rgb { width: 75px; height: 54px; border-right: 1px solid #323232; }
.plus { margin: 22px 0 0 9px; }
.xy { padding-left: 3px; }
.lines { padding: 4px 0 0 7px; line-height: 14px; white-space: pre; }
.preview h2, .para h2 { display: flex; align-items: center; gap: 10px; height: 28px; padding-left: 12px; color: var(--lit); }
.para h2 { gap: 8px; padding-left: 11px; height: 27px; }
.transport { display: flex; align-items: center; gap: 12px; padding: 8px 0 0 46px; color: #b8b8b8; }
.fonts { display: flex; margin-top: 10px; padding-left: 5px; }
.pickers { display: grid; gap: 5px; margin-right: 5px; }
.pickers .sel { width: 121px; height: 19px; }
.pickers .sel svg { border-left: 1px solid #303030; width: 18px; height: 17px; padding: 4px; margin: 0; }
.swatches { color: #b8b8b8; }
.props { display: grid; grid-template-columns: 25px 44px 37px 30px 45px 12px; row-gap: 4px; align-items: center; margin: 6px 6px 0 5px; padding: 2px 0 0; border-top: 1px solid #323232; white-space: nowrap; line-height: 15px; }
.props .gl { color: #b8b8b8; }
.props text { font-family: "Liberation Serif", serif; font-weight: 700; }
.props .ss { font-family: "Noto Sans CJK JP", sans-serif; font-weight: 400; }
.props .cut { fill: #222; font-family: "Liberation Sans", sans-serif; }
.tri { width: 8px; height: 8px; color: #999; }
.props.stroke { grid-template-columns: 25px 44px 13px 114px; padding-top: 5px; }
.props .sel { height: 18px; }
.props.last { margin-top: 7px; padding-top: 4px; }
.aligns { margin-left: 6px; margin-top: 5px; }

/* timeline */
.timeline { margin: 4px 1px 0 2px; border: 1px solid #2b7bd0; border-bottom: 0; background: var(--panel); display: flex; flex-direction: column; min-height: 0; }
.timeline .tabs { padding-bottom: 3px; }
.timeline .tabname { margin-left: 10px; }
.tl-body { display: flex; flex: 1; min-height: 0; }
.outline { flex: 0 0 849px; overflow: hidden; border-right: 1px solid #000; }
.tl-ctl { display: flex; height: 34px; align-items: center; padding-bottom: 2px; }
.tc { width: 99px; padding-left: 9px; display: flex; flex-direction: column; align-items: flex-start; line-height: 14px; }
.tc button { font: 700 15px/16px var(--ui); color: #2f9bf0; padding-left: 1px; }
.tc small { font-size: 10px; color: #1d639c; line-height: 13px; white-space: nowrap; }
.tl-search { display: flex; align-items: center; width: 547px; height: 19px; padding-left: 6px; background: #161616; border: 1px solid #2e2e2e; border-radius: 2px; color: #b0b0b0; }
.tl-search input { flex: 1; }
.tl-icons { display: flex; align-items: center; gap: 11px; padding-left: 16px; color: #b0b0b0; }
.tl-icons svg:nth-child(1), .tl-icons svg:nth-child(2) { margin-right: 5px; }
.tl-icons svg:nth-child(5) { margin-right: 6px; }
.tr { display: grid; grid-template-columns: 67px 32px 32px 223px 136px 101px 22px 102px 117px 1fr; height: 17px; white-space: nowrap; }
.tr > span { display: flex; align-items: center; min-width: 0; }
.th { height: 20px; background: #313131; border-top: 1px solid #000; border-bottom: 1px solid #000; font-size: 10px; }
.th > span { border-left: 1px solid #111; height: 12px; align-self: center; }
.th > .av, .th > .t, .th > .trk { border-left-color: transparent; }
.th .av { gap: 3px; padding-left: 3px; color: #b8b8b8; }
.th .av .dot { width: 7px; height: 7px; margin: 0 4px 0 3px; border-radius: 50%; background: #b8b8b8; }
.th .lab { padding-left: 13px; color: #b8b8b8; }
.th .num { padding-left: 5px; }
.th .src { padding-left: 5px; }
.sws { padding-left: 4px; gap: 2px; color: #b8b8b8; }
.sws > svg, .sws > i { width: 13px; height: 13px; }
.th .sws { padding-left: 3px; }
.fxt { font: italic 15px/12px "Liberation Serif", serif; text-align: center; }
.th .mode, .th .par { padding-left: 5px; }
.th .t { justify-content: center; }
.layer { background: #313131; font-weight: 700; border-bottom: 1px solid #222; }
.chosen { background: #4a4a4a; }
.av > i { width: 13px; height: 13px; margin-left: 2px; }
.av > i:first-child { margin-left: 3px; color: #c0c0c0; padding-top: 2px; }
.bx { background: #232323; width: 13px; height: 13px; }
.chosen .bx { background: #333; }
.layer .lab { padding-left: 5px; gap: 2px; }
.col { width: 12px; height: 13px; background: #b53a3a; }
.layer .num { padding-left: 7px; }
.ti { width: 20px; text-align: center; font: 700 12px/16px "Liberation Serif", serif; }
.src strong { color: var(--text); font-size: 10px; }
.chosen .src { padding-right: 1px; }
.chosen .src strong { flex: 1; padding-left: 3px; height: 16px; background: #a0a0a0; color: #1c1c1c; line-height: 15px; }
.solid { width: 13px; height: 13px; background: #ee2200; border: 1px solid #000; margin: 0 6px 0 4px; }
.bxs > * { background: #262626; }
.chosen .bxs > * { background: #363636; }
.bxs > .none, .chosen .bxs > .none { background: none; }
.faint { color: #777; }
.tr .sel { height: 15px; border: 0; font-weight: 400; }
.tr .mode .sel { width: 96px; margin-left: 4px; } .tr .trk .sel { width: 97px; } .tr .par .sel { width: 89px; margin-left: 6px; }
.tr .sel select { padding-left: 6px; }
.tr.layer .t { padding-left: 4px; }
.swirl { width: 13px; height: 12px; color: #a8a8a8; }
.layer .par { padding-left: 5px; }
.er { display: flex; height: 17px; line-height: 15px; border-bottom: 1px solid #1f1f1f; background: #252525; white-space: nowrap; }
.er > i { width: 13px; margin-left: 3px; height: 14px; line-height: 14px; }
.er .n { display: flex; align-items: center; width: 342px; padding-left: 88px; }
.er .n .ch { margin-right: 8px; }
.er .pos { padding-left: 101px; }
.er .pos .sw { margin-right: 5px; margin-left: 2px; }
.er button { color: var(--blue); width: 116px; text-align: left; padding-bottom: 1px; }
.er button.opt { width: 20px; font-size: 9px; font-weight: 700; }
.er .swirl { margin-left: 259px; margin-top: 1px; }

.time-pane { flex: 1; min-width: 0; overflow: hidden; position: relative; background: #232323; }
.navi { display: flex; height: 14px; padding-top: 4px; background: var(--panel); }
.navi i { border-top: 1px solid #000; border-bottom: 1px solid #000; }
.navi .cap { width: 7px; background: #2d8ceb; }
.cap.l { border-radius: 5px 0 0 5px; } .cap.r { border-radius: 0 5px 5px 0; }
.view { width: 175px; background: linear-gradient(90deg, #6a6a6a 22px, #3c78b0 22px 24px, #6a6a6a 24px); }
.navi .rest { flex: 1; margin-right: 6px; background: #423d36; border-color: #524838; }
.ruler { display: flex; height: 20px; background: var(--panel); margin-left: -33px; font-size: 10px; line-height: 14px; }
.ruler span { flex: 0 0 81px; text-align: center; background: linear-gradient(#999, #999) 50% 100% / 1px 5px no-repeat; }
.ruler .s { background-size: 1px 7px; }
.work { height: 16px; background: #626262; border-top: 1px solid #000; border-bottom: 1px solid #000; padding-left: 1px; }
.work i { width: 6px; height: 14px; background: #2d8ceb; border-radius: 4px 0 0 4px; }
.cache { height: 4px; padding-left: 105px; border-bottom: 1px solid #000; }
.cache i { width: 7px; height: 3px; background: #12b52a; }
.tracks { margin-left: 7px; height: 100%; background: #333; }
.tk { height: 17px; border-bottom: 1px solid #232323; }
.clipbar { height: 16px; background: #7d3737; border-top: 1px solid #8f4a4a; }
.clipbar.lit { background: linear-gradient(#b04c4c, #984242); border-top-color: #d78a8a; border-left: 1px solid #d78a8a; }
.keys { display: flex; align-items: center; }
.k { width: 5px; height: 5px; border-radius: 50%; background: #b0b0b0; margin-left: -3px; }
.k2 { margin-left: 239px; }
.playhead { position: absolute; left: 99px; top: 19px; bottom: 0; width: 11px; background: linear-gradient(#2f83d6, #2f83d6) 5px 0 / 1px 100% no-repeat; }
.beams { display: flex; flex-direction: column; align-items: center; padding-top: 37px; }
.beams svg, .beams span { width: 8px; height: 12px; margin-bottom: 5px; }
.gutter { width: 17px; background: #252525; padding-top: 35px; display: flex; flex-direction: column; align-items: center; gap: 6px; color: #b8b8b8; }
```
